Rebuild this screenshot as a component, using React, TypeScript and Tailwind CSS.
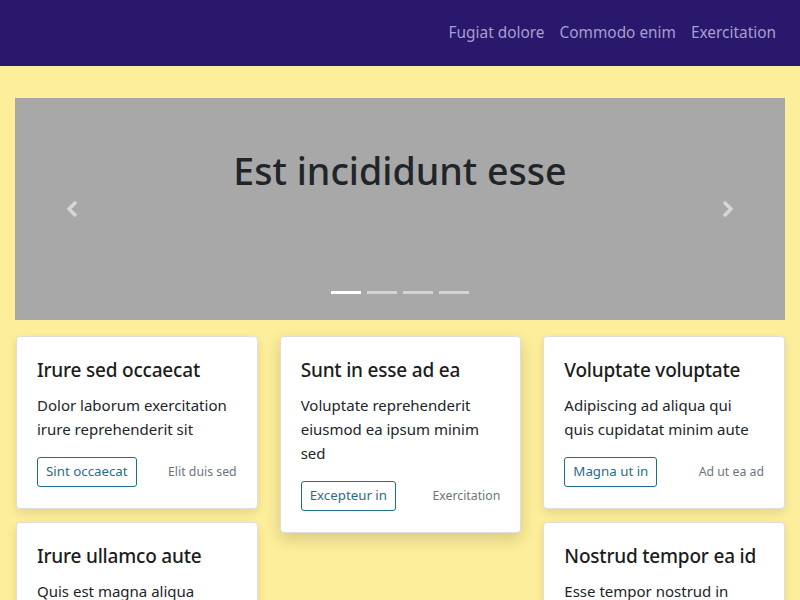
import React from "react";

const font = { fontFamily: '"Noto Sans", "Open Sans", sans-serif' };

type Card = { title: string; text: string; btn?: string; meta?: string; elevated?: boolean };

const col1: Card[] = [
  { title: "Irure sed occaecat", text: "Dolor laborum exercitation irure reprehenderit sit", btn: "Sint occaecat", meta: "Elit duis sed" },
  { title: "Irure ullamco aute", text: "Quis est magna aliqua laboris nisi irure", btn: "Dolor sint", meta: "Amet ut" },
];
const col2: Card[] = [
  { title: "Sunt in esse ad ea", text: "Voluptate reprehenderit eiusmod ea ipsum minim sed", btn: "Excepteur in", meta: "Exercitation", elevated: true },
];
const col3: Card[] = [
  { title: "Voluptate voluptate", text: "Adipiscing ad aliqua qui quis cupidatat minim aute", btn: "Magna ut in", meta: "Ad ut ea ad" },
  { title: "Nostrud tempor ea id", text: "Esse tempor nostrud in commodo culpa", btn: "Velit esse", meta: "Irure" },
];

function CardView({ c }: { c: Card }) {
  return (
    <div
      className={
        "bg-white rounded-[4px] border border-[#dedede] px-5 pt-5 pb-[21px] " +
        (c.elevated
          ? "shadow-[0_6px_16px_rgba(0,0,0,0.16)]"
          : "shadow-[0_4px_10px_rgba(0,0,0,0.10)]")
      }
    >
      <h3 className="text-[19px] leading-[26px] font-medium tracking-[-0.2px] text-[#1c1c1c] whitespace-nowrap">{c.title}</h3>
      <p className="mt-[10px] text-[15px] leading-[24px] text-[#212529]">{c.text}</p>
      <div className="mt-4 flex items-center justify-between">
        <button className="h-[30px] px-2 border border-[#1f6e87] rounded-[3px] text-[13.3px] text-[#1f6e87] bg-white">
          {c.btn}
        </button>
        <span className="text-[12.3px] text-[#6c757d]">{c.meta}</span>
      </div>
    </div>
  );
}

export default function App() {
  return (
    <div className="h-[600px] overflow-hidden bg-[#fdee9b]" style={font}>
      <header className="h-[66px] bg-[#29186c] flex items-center justify-end pr-6 gap-[15px]">
        {["Fugiat dolore", "Commodo enim", "Exercitation"].map((t) => (
          <a key={t} className="text-[15.4px] text-[#a79fd0]">{t}</a>
        ))}
      </header>
      <div className="px-[15px] pt-8">
        <div className="relative h-[222px] bg-[#a8a8a8] flex justify-center">
          <h1 className="mt-[49px] text-[37.6px] leading-[48px] font-medium text-[#212529]">Est incididunt esse</h1>
          <svg className="absolute left-[50px] top-[101px]" width="16" height="20" viewBox="0 0 16 20">
            <path d="M11 3 L4 10 L11 17" stroke="#d6d6d6" strokeWidth="3.5" fill="none" />
          </svg>
          <svg className="absolute left-[704px] top-[101px]" width="16" height="20" viewBox="0 0 16 20">
            <path d="M5 3 L12 10 L5 17" stroke="#d6d6d6" strokeWidth="3.5" fill="none" />
          </svg>
          <div className="absolute bottom-[26px] left-0 right-0 flex justify-center gap-[6px]">
            <span className="w-[30px] h-[3px] bg-white" />
            <span className="w-[30px] h-[3px] bg-[#d4d4d4]" />
            <span className="w-[30px] h-[3px] bg-[#d4d4d4]" />
            <span className="w-[30px] h-[3px] bg-[#d4d4d4]" />
          </div>
        </div>
        <div className="mt-4 flex gap-[22px] pl-px">
          {[col1, col2, col3].map((col, i) => (
            <div key={i} className="flex-1 min-w-0 flex flex-col gap-[13px]">
              {col.map((c) => (
                <CardView key={c.title} c={c} />
              ))}
            </div>
          ))}
        </div>
      </div>
    </div>
  );
}
